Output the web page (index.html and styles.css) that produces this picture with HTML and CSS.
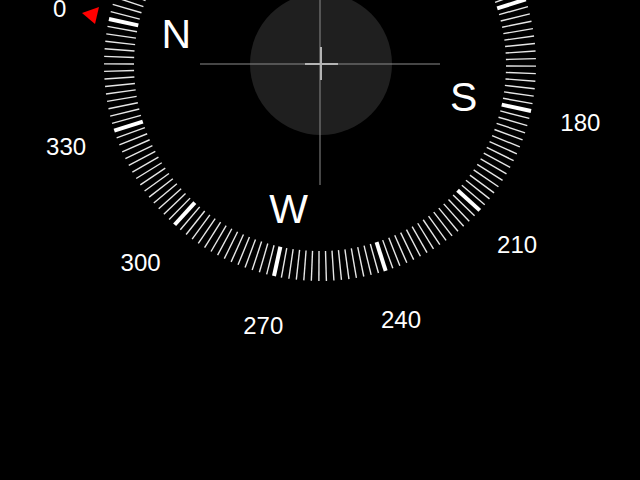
FILE: index.html
```html
<!DOCTYPE html>
<html lang="en">
<head>
  <meta charset="UTF-8" />
  <title>Compass</title>
  <link rel="stylesheet" href="styles.css">
</head>
<body>
  <div class="screen">
    <svg id="dial" class="dial" width="640" height="480" viewBox="0 0 640 480">
      <circle class="level" cx="321" cy="64" r="71" />
      <line class="cross" x1="320" y1="0" x2="320" y2="185" />
      <line class="cross" x1="200" y1="64" x2="440" y2="64" />
      <line class="plus" x1="305" y1="64" x2="338" y2="64" />
      <line class="plus" x1="321" y1="47" x2="321" y2="80" />
      <g id="ticks"></g>
      <g id="labels"></g>
      <polygon class="marker" points="82,13 99,7 95,24" />
    </svg>
  </div>

  <script>
    const ns = 'http://www.w3.org/2000/svg';
    const ticks = document.getElementById('ticks');
    const labels = document.getElementById('labels');
    const cx = 320, cy = 65;
    const heading = 282.3; // dial rotation in degrees

    function point(deg, r) {
      const a = (deg + heading) * Math.PI / 180;
      return [cx + r * Math.sin(a), cy - r * Math.cos(a)];
    }

    for (let d = 0; d < 360; d += 2) {
      const [x1, y1] = point(d, 186);
      const [x2, y2] = point(d, 216);
      const line = document.createElementNS(ns, 'line');
      line.setAttribute('x1', x1);
      line.setAttribute('y1', y1);
      line.setAttribute('x2', x2);
      line.setAttribute('y2', y2);
      line.setAttribute('class', d % 30 === 0 ? 'tick major' : 'tick');
      ticks.appendChild(line);
    }

    function addText(str, deg, r, cls) {
      const [x, y] = point(deg, r);
      if (y < -10) return; // off the top of the screen
      const t = document.createElementNS(ns, 'text');
      t.setAttribute('x', x);
      t.setAttribute('y', y + 0.5);
      t.setAttribute('class', cls);
      t.textContent = str;
      labels.appendChild(t);
    }

    for (let d = 0; d < 360; d += 30) addText(String(d), d, 266.5, 'deg');
    [['N', 0], ['E', 90], ['S', 180], ['W', 270]].forEach(([l, d]) => addText(l, d, 147, 'card'));
  </script>
</body>
</html>
```

FILE: styles.css
```css
* { box-sizing: border-box; margin: 0; padding: 0; }

body {
  background: #000;
  font-family: 'Liberation Sans', Arial, sans-serif;
  overflow: hidden;
}

.screen {
  width: 640px;
  height: 480px;
  background: #000;
}

.dial {
  display: block;
}

.level {
  fill: #1f1f1f;
}

.cross {
  stroke: #8c8c8c;
  stroke-width: 1;
}

.plus {
  stroke: #b4b4b4;
  stroke-width: 2;
}

.tick {
  stroke: #e6e6e6;
  stroke-width: 1.4;
}

.tick.major {
  stroke: #fff;
  stroke-width: 4;
}

.deg {
  fill: #fff;
  font-size: 24px;
  text-anchor: middle;
  dominant-baseline: central;
}

.card {
  fill: #fff;
  font-size: 41px;
  text-anchor: middle;
  dominant-baseline: central;
}

.marker {
  fill: #f00;
}
```
